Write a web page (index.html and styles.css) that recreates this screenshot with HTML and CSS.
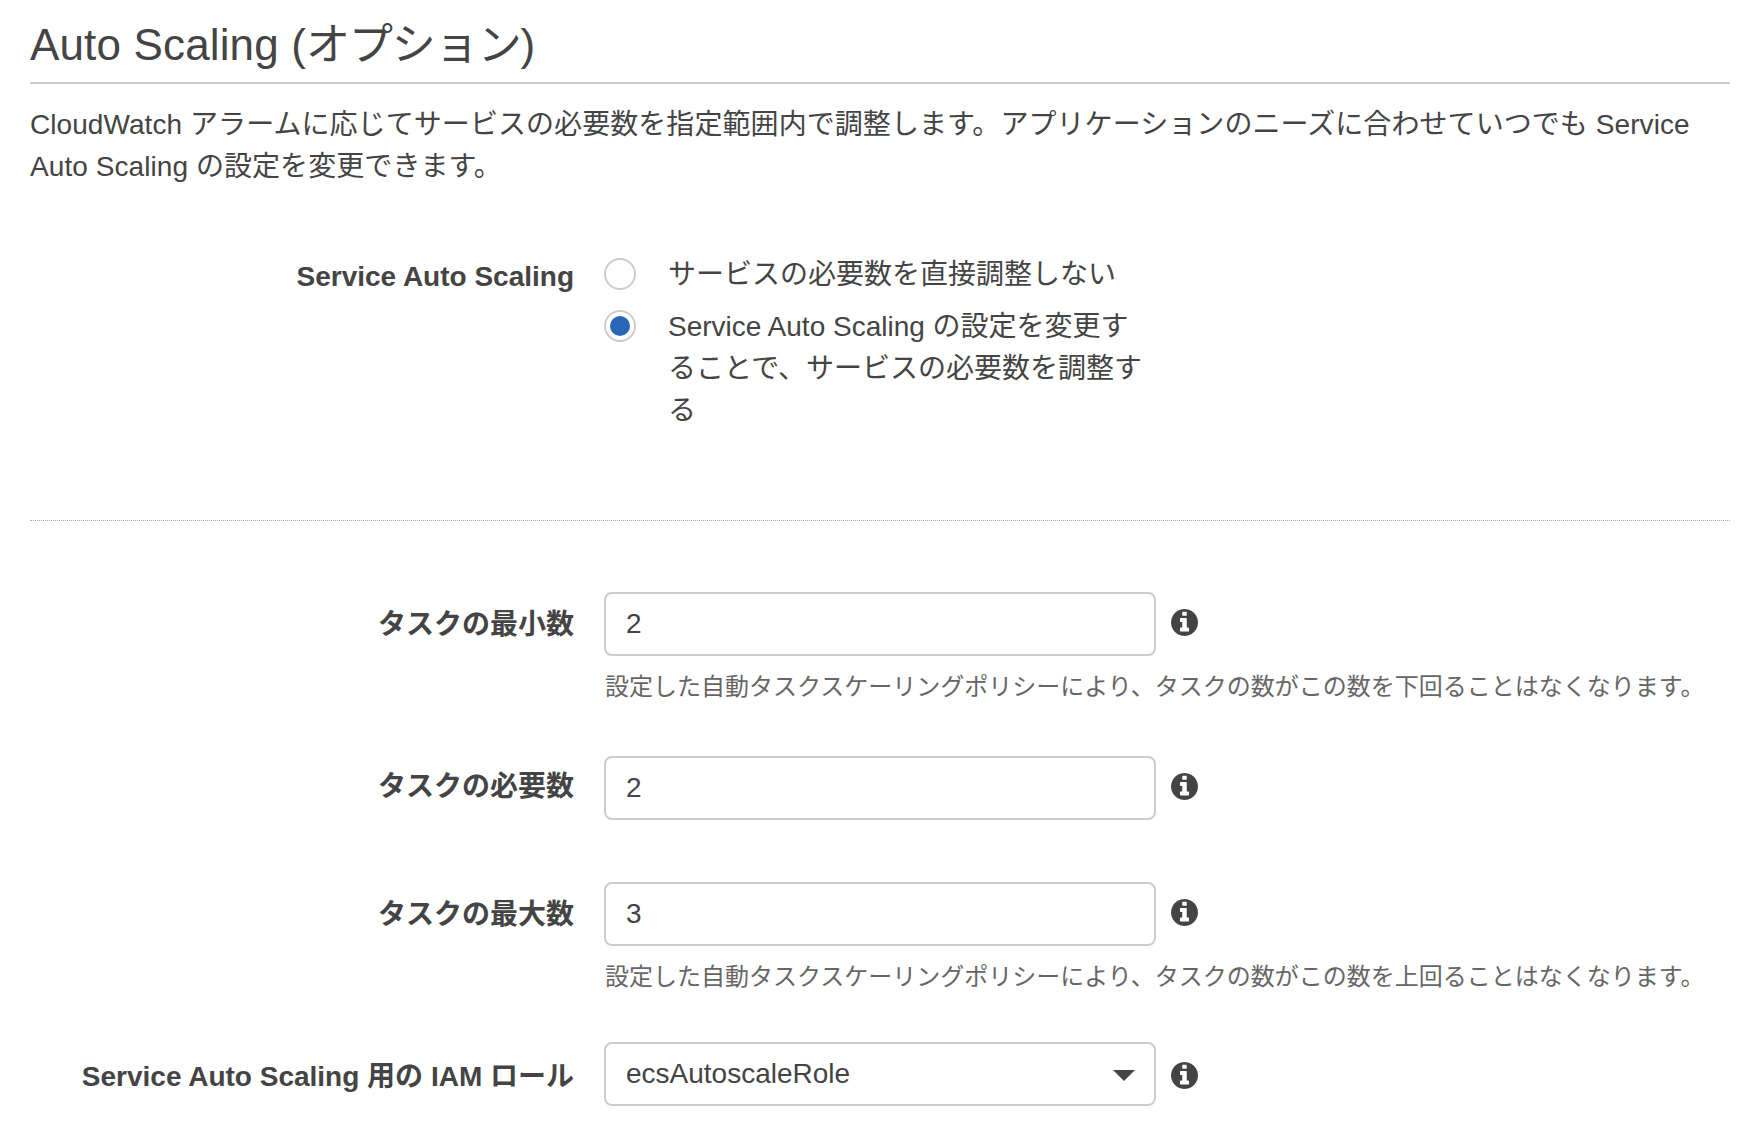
FILE: index.html
```html
<!DOCTYPE html>
<html lang="ja">
<head>
<meta charset="utf-8">
<title>Auto Scaling</title>
<link rel="stylesheet" href="styles.css">
</head>
<body>
<svg class="defs" width="0" height="0" aria-hidden="true">
  <symbol id="info" viewBox="128 128 1536 1536">
    <path d="M1152 1376v-160q0-14-9-23t-23-9h-96v-512q0-14-9-23t-23-9h-320q-14 0-23 9t-9 23v160q0 14 9 23t23 9h96v320h-96q-14 0-23 9t-9 23v160q0 14 9 23t23 9h448q14 0 23-9t9-23zm-128-896v-160q0-14-9-23t-23-9h-192q-14 0-23 9t-9 23v160q0 14 9 23t23 9h192q14 0 23-9t9-23zm640 416q0 209-103 385.5t-279.5 279.5-385.5 103-385.5-103-279.5-279.5-103-385.5 103-385.5 279.5-279.5 385.5-103 385.5 103 279.5 279.5 103 385.5z"/>
  </symbol>
</svg>
<main class="page">
  <h2 class="title">Auto Scaling (<span class="kana">オプション</span>)</h2>
  <p class="desc">CloudWatch アラームに応じてサービスの必要数を指定範囲内で調整します。アプリケーションのニーズに合わせていつでも Service Auto Scaling の設定を変更できます。</p>

  <section class="row row-radio">
    <div class="label">Service Auto Scaling</div>
    <div class="radios">
      <div class="radio-item"><span class="radio"></span><span class="radio-text">サービスの必要数を直接調整しない</span></div>
      <div class="radio-item"><span class="radio checked"></span><span class="radio-text">Service Auto Scaling の設定を変更することで、サービスの必要数を調整する</span></div>
    </div>
  </section>

  <hr class="dotted">

  <section class="row row-min">
    <div class="label">タスクの最小数</div>
    <div class="control">
      <div class="field-line"><div class="input">2</div><svg class="info"><use href="#info"/></svg></div>
      <p class="help">設定した自動タスクスケーリングポリシーにより、タスクの数がこの数を下回ることはなくなります。</p>
    </div>
  </section>

  <section class="row row-des">
    <div class="label">タスクの必要数</div>
    <div class="control">
      <div class="field-line"><div class="input">2</div><svg class="info"><use href="#info"/></svg></div>
    </div>
  </section>

  <section class="row row-max">
    <div class="label">タスクの最大数</div>
    <div class="control">
      <div class="field-line"><div class="input">3</div><svg class="info"><use href="#info"/></svg></div>
      <p class="help">設定した自動タスクスケーリングポリシーにより、タスクの数がこの数を上回ることはなくなります。</p>
    </div>
  </section>

  <section class="row row-role">
    <div class="label">Service Auto Scaling 用の IAM ロール</div>
    <div class="control">
      <div class="field-line"><div class="input select">ecsAutoscaleRole<span class="caret"></span></div><svg class="info"><use href="#info"/></svg></div>
    </div>
  </section>
</main>
</body>
</html>
```
FILE: styles.css
```css
* { box-sizing: border-box; }
html, body { margin: 0; background: #fff; }
body {
  width: 1738px;
  height: 1136px;
  overflow: hidden;
  font-family: "Liberation Sans", "Noto Sans CJK JP", sans-serif;
  font-size: 28px;
  line-height: 42px;
  color: #444;
}
.defs { position: absolute; }
.page { padding: 0 8px 0 30px; }
.title {
  margin: 0;
  height: 84px;
  padding-top: 19px;
  font-size: 44px;
  line-height: 52px;
  font-weight: 400;
  letter-spacing: .15px;
  border-bottom: 2px solid #ccc;
}
.kana { letter-spacing: -1.1px; }
.desc { margin: 20px 0 0; letter-spacing: .07px; }
.row { display: flex; align-items: flex-start; }
.label {
  flex: 0 0 544px;
  text-align: right;
  font-weight: 700;
}
.row-radio { margin-top: 65px; }
.row-radio .label { padding-top: 3px; }
.radios { margin-left: 30px; width: 551px; }
.radio-item { display: flex; align-items: flex-start; margin-bottom: 9px; }
.radio {
  flex: 0 0 32px;
  height: 32px;
  margin-top: 5px;
  margin-right: 32px;
  border: 2px solid #ccc;
  border-radius: 50%;
  background: #fff;
  position: relative;
}
.radio.checked::after {
  content: "";
  position: absolute;
  left: 4px;
  top: 4px;
  width: 20px;
  height: 20px;
  border-radius: 50%;
  background: #2a66b8;
}
.radio-text { width: 480px; padding-top: 1px; }
.dotted {
  margin: 79px 0 0;
  border: 0;
  border-top: 1px dotted #aaa;
}
.row-min { margin-top: 71px; }
.row-des { margin-top: 51px; }
.row-max { margin-top: 62px; }
.row-role { margin-top: 47px; }
.row-min .label, .row-max .label { padding-top: 12px; }
.row-des .label { padding-top: 10px; }
.row-role .label { padding-top: 14px; }
.control { margin-left: 30px; }
.field-line { display: flex; align-items: center; }
.input {
  width: 552px;
  height: 64px;
  padding: 0 20px;
  border: 2px solid #ccc;
  border-radius: 8px;
  line-height: 60px;
  background: #fff;
  position: relative;
}
.caret {
  position: absolute;
  right: 19px;
  top: 26px;
  width: 0;
  height: 0;
  border-left: 11px solid transparent;
  border-right: 11px solid transparent;
  border-top: 11px solid #444;
}
.info {
  width: 27px;
  height: 27px;
  margin-left: 15px;
  margin-top: -4px;
  fill: #444;
}
.row-role .info { margin-top: 2px; }
.help {
  margin: 13px 0 0;
  padding-left: 1px;
  font-size: 24px;
  line-height: 36px;
  color: #666;
  white-space: nowrap;
}
```
